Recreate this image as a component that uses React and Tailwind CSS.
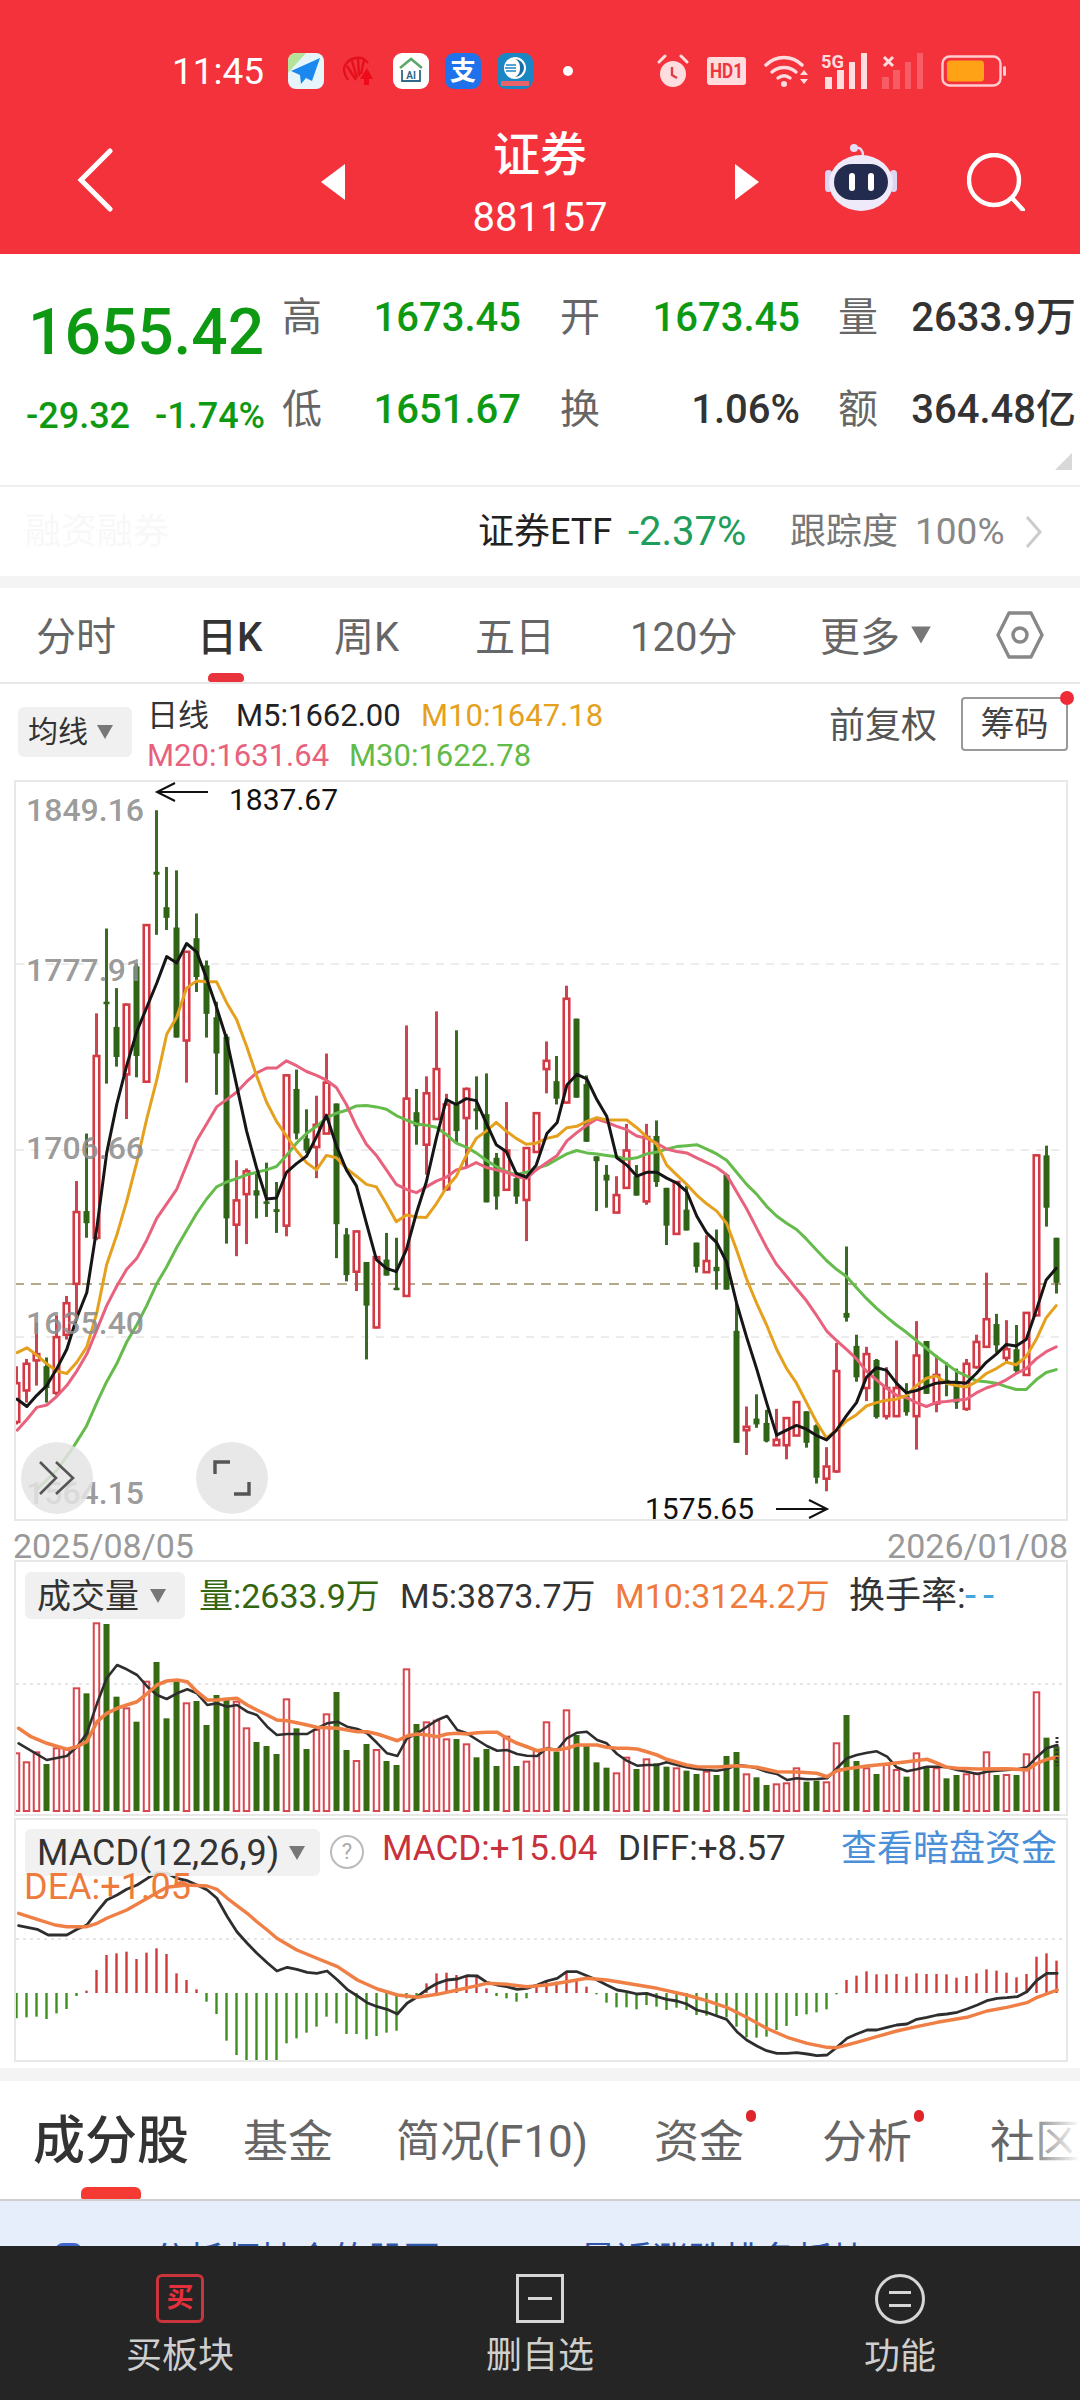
import React from "react";

const parse = (s) => s.trim().split(/\s+/).map((p) => p.split(",").map(Number));
const kx = 2.904, ky = 2.063;
const candlePts = (l, r) =>
  [...parse(l).map(([x, y]) => [x / kx, 770 + y / ky]), ...parse(r).map(([x, y]) => [540 + x / kx, 770 + y / ky])]
    .map(([x, y]) => `${x.toFixed(1)},${y.toFixed(1)}`).join(" ");
const pts2 = (s, top) => parse(s).map(([x, y]) => `${(x / 1.452).toFixed(1)},${(top + y / 3).toFixed(1)}`).join(" ");

// type, wick top, body top, body bottom, wick bottom (measured on the zoomed reference)
const CANDLES = `r 1230 1265 1345 1350|r 1215 1225 1280 1305|r 1140 1205 1218 1270|g 1212 1230 1275 1305|r 1125 1170 1285 1290|r 1085 1100 1165 1175|r 848 912 1060 1130|g 750 910 935 965|r 502 590 965 970|g 327 478 482 647|g 450 530 592 612|r 482 484 628 720|g 400 405 590 634|r 320 320 643 645|g 83 210 216 340|g 200 283 305 330|g 207 325 552 552|r 375 375 558 645|g 296 347 427 458|g 393 403 503 552|g 478 510 585 670|g 545 550 925 977|r 805 888 938 1003|r 822 828 875 978|g 830 867 878 925|g 810 890 895 922|g 850 906 912 955|r 628 630 940 962|g 618 658 750 762|g 700 760 785 790|r 672 732 778 842|r 585 645 750 750|g 688 688 937 1007|g 945 958 1042 1055|r 950 952 1035 1075|g 1015 1015 1105 1216|r 1005 1005 1150 1152|g 955 1010 1043 1043|g 965 1068 1073 1073|r 527 678 1085 1087|g 658 706 735 773|r 632 667 773 835|r 498 617 720 722|r 668 690 865 868|g 537 690 745 770|r 655 658 718 820|g 632 698 704 742|g 626 710 892 892|g 790 800 880 907|r 685 785 866 868|g 830 842 880 895|r 778 780 887 972|r 707 708 788 790|r 560 600 617 667|g 590 642 678 690|r 445 472 686 688|g 513 513 676 676|g 630 648 767 767|g 797 797 807 910|g 815 835 847 903|r 838 877 913 913|r 730 785 862 862|g 815 838 878 878|r 730 757 890 897|g 723 755 850 860|g 862 862 940 980|r 848 850 957 958|g 858 907 950 950|g 975 975 1025 1037|r 960 1013 1036 1037|g 948 1025 1034 1072|g 835 835 1072 1072|g 1100 1157 1388 1388|r 1313 1355 1362 1413|g 1288 1338 1350 1357|g 1320 1347 1385 1387|r 1318 1382 1393 1393|r 1335 1337 1393 1422|r 1303 1304 1373 1373|g 1323 1323 1388 1398|g 1350 1352 1460 1472|r 1397 1437 1462 1488|r 1182 1240 1447 1450|g 983 1120 1130 1138|g 1165 1188 1253 1262|r 1190 1205 1275 1302|g 1215 1217 1335 1338|r 1232 1275 1333 1340|r 1177 1275 1333 1335|g 1265 1290 1325 1332|r 1137 1208 1333 1402|g 1178 1178 1287 1287|r 1207 1248 1307 1325|g 1222 1258 1265 1292|g 1235 1265 1305 1318|r 1215 1225 1318 1322|r 1165 1180 1232 1235|r 1037 1133 1190 1192|g 1122 1143 1187 1202|r 1135 1195 1213 1222|g 1145 1195 1240 1245|r 1120 1120 1248 1250|r 795 795 1125 1127|g 775 795 903 942|g 965 965 1058 1080`
  .split("|").map((s) => { const [t, ...n] = s.split(" "); return [t, ...n.map((v) => 770 + Number(v) / ky)]; });

const MA5 = candlePts("50,1298 78,1313 107,1290 136,1270 165,1235 194,1195 223,1130 252,1078 281,945 310,790 339,690 368,610 397,540 426,490 455,440 484,385 513,398 542,358 571,375 600,430 629,490 658,555 687,650 716,745 745,820 774,885 803,883 832,830 861,812 890,797 919,757 948,712 977,775 1006,825 1035,858 1064,935 1093,1010 1122,1028 1151,1035 1180,990 1209,915 1238,850 1267,760 1296,680 1325,690 1354,678 1383,682 1412,728 1441,773 1470,787 1499,832 1528,840 1557,815",
  "20,750 50,727 78,650 107,628 136,637 165,680 194,715 223,800 252,815 281,838 310,830 339,830 368,842 397,852 426,870 455,920 484,955 513,975 542,1015 571,1100 600,1170 629,1235 658,1305 687,1372 716,1362 745,1352 774,1360 803,1373 832,1382 861,1362 890,1332 919,1305 948,1253 977,1233 1006,1238 1035,1265 1064,1285 1093,1280 1122,1272 1151,1265 1180,1263 1209,1263 1238,1265 1267,1245 1296,1222 1325,1205 1354,1185 1383,1188 1412,1175 1441,1115 1470,1052 1499,1028");
const MA10 = candlePts("50,1202 78,1192 107,1207 136,1225 165,1240 194,1245 223,1222 252,1190 281,1120 310,1020 339,960 368,890 397,810 426,720 455,640 484,545 513,510 542,450 571,435 600,437 629,437 658,480 687,515 716,570 745,630 774,685 803,725 832,755 861,785 890,810 919,825 948,795 977,800 1006,822 1035,838 1064,855 1093,860 1122,895 1151,932 1180,918 1209,922 1238,923 1267,895 1296,862 1325,838 1354,795 1383,760 1412,745 1441,727 1470,745 1499,760 1528,772 1557,770",
  "20,760 50,755 78,738 107,735 136,725 165,717 194,722 223,722 252,722 281,738 310,757 339,772 368,815 397,835 426,855 455,877 484,895 513,910 542,935 571,990 600,1050 629,1100 658,1145 687,1195 716,1235 745,1265 774,1305 803,1345 832,1378 861,1362 890,1343 919,1330 948,1312 977,1305 1006,1300 1035,1298 1064,1290 1093,1270 1122,1255 1151,1250 1180,1265 1209,1270 1238,1273 1267,1262 1296,1245 1325,1235 1354,1222 1383,1227 1412,1210 1441,1175 1470,1130 1499,1105");
const MA20 = candlePts("50,1362 78,1340 107,1315 136,1310 165,1292 194,1270 223,1240 252,1205 281,1155 310,1105 339,1065 368,1030 397,1008 426,970 455,925 484,895 513,865 542,815 571,765 600,730 629,695 658,680 687,665 716,643 745,625 774,615 803,615 832,600 861,610 890,622 919,630 948,640 977,655 1006,690 1035,735 1064,772 1093,795 1122,825 1151,855 1180,865 1209,872 1238,860 1267,848 1296,840 1325,825 1354,820 1383,810 1412,820 1441,825 1470,830 1499,838 1528,843 1557,825",
  "20,810 50,795 78,765 107,748 136,733 165,720 194,727 223,735 252,742 281,755 310,760 339,770 368,782 397,787 426,790 455,800 484,810 513,820 542,835 571,870 600,905 629,945 658,985 687,1020 716,1045 745,1070 774,1095 803,1125 832,1157 861,1177 890,1195 919,1215 948,1240 977,1258 1006,1275 1035,1290 1064,1295 1093,1305 1122,1313 1151,1305 1180,1303 1209,1300 1238,1298 1267,1285 1296,1275 1325,1268 1354,1258 1383,1245 1412,1235 1441,1215 1470,1200 1499,1190");
const MA30 = candlePts("110,1482 165,1445 210,1400 250,1355 281,1305 310,1262 339,1225 368,1180 397,1145 426,1105 455,1060 484,1025 513,985 542,950 571,915 600,885 629,860 658,850 687,843 716,835 745,830 774,825 803,818 832,795 861,770 890,750 919,735 948,718 977,708 1006,702 1035,693 1064,692 1093,695 1122,700 1151,713 1180,722 1209,730 1238,733 1267,737 1296,752 1325,770 1354,778 1383,790 1412,805 1441,818 1470,828 1499,835 1528,830 1557,822",
  "20,815 50,803 78,792 107,785 136,790 165,792 194,795 223,798 252,803 281,800 310,792 339,788 368,782 397,777 426,775 455,773 484,782 513,792 542,805 571,830 600,855 629,875 658,900 687,920 716,935 745,948 774,968 803,990 832,1012 861,1030 890,1045 919,1068 948,1090 977,1110 1006,1128 1035,1145 1064,1160 1093,1177 1122,1193 1151,1210 1180,1225 1209,1240 1238,1250 1267,1260 1296,1262 1325,1265 1354,1272 1383,1278 1412,1278 1441,1258 1470,1243 1499,1237");

const VOL = `670r 697r 667r 702g 655r 658r 475r 490g 280r 282g 500g 535r 575g 455r 396g 565g 455g 520r 513g 585g 495g 510g 515r 595r 636g 648g 672g 508r 595g 657g 600r 553r 486g 660g 693r 642g 660r 693g 705g 418r 582g 577r 572r 628r 627g 643r 682g 657g 708g 620r 708g 695r 660r 577r 665g 541r 615g 645g 697g 713g 730r 683r 717g 688r 700g 710g 715r 722g 732g 725r 735g 678g 666g 733r 742g 765g 763r 760r 715r 755g 752g 757r 640r 555g 693g 715r 732g 705r 720r 740g 670r 708g 715r 745g 735g 733r 730r 667r 735g 735r 735g 673r 487r 623g 650g`
  .split(" ").map((s) => [s.slice(-1), 1530 + Number(s.slice(0, -1)) / 3]);
const VOLK = pts2("27,640 68,690 97,678 112,650 126,610 141,520 155,445 170,405 184,418 199,435 214,470 228,495 242,507 257,490 272,478 286,490 301,525 315,520 330,530 344,525 359,545 373,555 388,590 402,615 417,612 446,612 460,595 475,580 490,575 504,590 519,597 533,610 548,640 562,670 577,678 591,625 606,610 620,590 635,570 649,558 664,600 678,610 693,630 707,648 722,662 736,660 751,672 765,677 780,678 794,655 809,660 823,625 838,608 852,605 867,630 881,640 896,672 910,692 925,707 939,705 954,705 968,697 983,705 997,712 1012,717 1026,720 1041,722 1055,717 1070,705 1084,708 1099,715 1113,725 1128,732 1143,750 1157,745 1172,748 1186,747 1201,745 1215,715 1230,685 1244,675 1259,668 1273,664 1288,680 1302,712 1317,724 1331,718 1346,710 1361,710 1375,712 1390,720 1404,725 1419,732 1433,725 1448,722 1462,720 1477,718 1491,712 1506,680 1520,655 1535,645", 1530);
const VOLO = pts2("27,595 45,620 68,640 97,658 112,650 126,635 141,575 155,550 170,535 184,525 199,515 214,490 228,465 242,453 257,450 272,455 286,485 301,510 315,510 330,507 344,505 359,525 373,540 388,555 402,570 417,572 431,578 446,585 460,592 490,595 504,600 519,605 533,605 548,612 562,622 577,632 591,618 606,612 620,615 635,620 649,612 664,610 678,612 693,608 707,607 722,607 736,625 751,640 765,650 780,662 794,657 809,660 823,655 838,645 852,645 867,645 881,652 896,655 910,655 925,657 939,665 954,675 968,688 983,697 997,705 1012,710 1041,711 1070,707 1099,712 1128,725 1157,726 1186,730 1201,740 1215,722 1230,716 1259,708 1288,702 1317,695 1346,688 1361,700 1375,712 1390,715 1419,717 1462,716 1491,720 1506,700 1520,688 1535,682", 1530);

const MACD = `625 622 620 627 610 597 558 542 480 435 430 425 447 428 415 432 490 510 538 575 612 692 735 750 755 755 752 700 685 668 650 620 640 672 672 688 678 668 662 565 560 520 490 488 495 495 500 535 558 565 575 565 530 515 515 485 510 530 553 578 592 592 598 585 590 600 593 600 615 617 620 622 650 682 683 680 660 648 618 613 607 598 553 510 497 484 493 493 492 500 490 492 492 493 503 498 490 478 482 488 502 492 440 430 452`
  .split(" ").map(Number);
const MACK = pts2("27,347 54,358 70,375 97,375 112,358 126,345 141,305 155,270 170,255 184,238 199,225 214,205 228,188 242,190 257,205 272,212 286,225 301,240 315,265 330,320 344,365 359,400 373,430 388,458 402,483 417,472 431,478 446,487 460,490 475,483 490,510 504,538 519,558 533,578 548,590 562,598 577,612 591,580 606,560 620,538 635,520 649,510 664,507 678,497 693,498 707,517 722,525 736,530 751,538 765,535 780,525 794,513 809,505 823,485 838,485 852,497 867,510 881,525 896,540 910,545 925,552 939,550 954,560 968,568 983,573 997,582 1012,600 1026,607 1041,618 1055,628 1070,665 1084,690 1099,708 1113,722 1128,730 1143,730 1157,728 1172,732 1186,737 1201,735 1215,712 1230,685 1244,672 1259,660 1273,660 1288,652 1302,645 1317,642 1331,628 1346,622 1361,615 1375,612 1390,607 1404,597 1419,585 1433,572 1448,565 1462,563 1477,560 1491,545 1506,510 1520,490 1535,490", 1810);
const MACO = pts2("27,310 54,328 80,345 97,350 126,350 141,340 155,325 184,300 214,265 242,232 272,225 301,228 315,238 330,265 359,310 373,335 388,360 402,385 431,420 460,445 490,470 519,510 548,537 577,555 606,562 635,553 664,540 693,527 707,520 736,523 765,530 794,525 823,515 852,505 881,510 910,520 954,535 997,555 1026,572 1055,592 1084,622 1113,655 1143,682 1172,700 1201,712 1215,713 1244,697 1273,680 1302,663 1331,650 1361,637 1404,622 1433,603 1462,592 1491,578 1506,562 1535,540", 1810);

const Line = ({ points, color, w = 3 }) => (
  <polyline points={points} fill="none" stroke={color} strokeWidth={w} strokeLinejoin="round" strokeLinecap="round" />
);

const Caret = ({ className = "" }) => (
  <svg width="18" height="16" viewBox="0 0 18 16" className={className}><path d="M1 1h16L9 15z" fill="#777" /></svg>
);

function CandleChart() {
  return (
    <svg viewBox="16 782 1050 737" className="absolute inset-0 w-full h-full">
      <g stroke="#e6e6e6" strokeWidth="1.5" strokeDasharray="8 7">
        <line x1="16" x2="1066" y1="964" y2="964" />
        <line x1="16" x2="1066" y1="1150" y2="1150" />
        <line x1="16" x2="1066" y1="1337" y2="1337" />
      </g>
      <line x1="14" x2="1068" y1="1284" y2="1284" stroke="#b3a98a" strokeWidth="2" strokeDasharray="10 7" />
      {CANDLES.map(([t, wt, bt, bb, wb], i) => {
        const x = 16.5 + i * 10;
        if (t === "g")
          return (
            <g key={i}>
              <line x1={x} x2={x} y1={wt} y2={wb} stroke="#3a6b24" strokeWidth="3" />
              <rect x={x - 3} y={bt} width="6" height={Math.max(bb - bt, 2.5)} fill="#2f6417" />
            </g>
          );
        return (
          <g key={i}>
            <line x1={x} x2={x} y1={wt} y2={bt} stroke="#cb4550" strokeWidth="3" />
            <line x1={x} x2={x} y1={bb} y2={wb} stroke="#cb4550" strokeWidth="3" />
            <rect x={x - 2.75} y={bt} width="5.5" height={bb - bt} fill="#fff" stroke="#d43a46" strokeWidth="2.6" />
          </g>
        );
      })}
      <Line points={MA30} color="#65bb4c" />
      <Line points={MA20} color="#e8617d" />
      <Line points={MA10} color="#e5a11e" />
      <Line points={MA5} color="#161616" />
      <path d="M208 792H158M175 783l-18 9 18 9" fill="none" stroke="#111" strokeWidth="2" />
      <path d="M776 1509H826M809 1500l18 9-18 9" fill="none" stroke="#111" strokeWidth="2" />
    </svg>
  );
}

function VolChart() {
  return (
    <svg viewBox="16 1562 1050 252" className="absolute inset-0 w-full h-full">
      <line x1="16" x2="1066" y1="1684" y2="1684" stroke="#ddd" strokeWidth="1.5" strokeDasharray="3 4" />
      {VOL.map(([t, top], i) => {
        const x = 16.5 + i * 10;
        return t === "g"
          ? <rect key={i} x={x - 3} y={top} width="6" height={1811 - top} fill="#376b13" />
          : <rect key={i} x={x - 2.75} y={top} width="5.5" height={1811 - top} fill="#fff" stroke="#d8464f" strokeWidth="2" />;
      })}
      <Line points={VOLK} color="#2e2e2e" w="2.6" />
      <Line points={VOLO} color="#ef7f45" w="3.6" />
      <line x1="1057" x2="1057" y1="1737" y2="1766" stroke="#333" strokeWidth="3" strokeDasharray="2 2" />
    </svg>
  );
}

function MacdChart() {
  return (
    <svg viewBox="16 1820 1050 240" className="absolute inset-0 w-full h-full">
      <line x1="16" x2="1066" y1="1939" y2="1939" stroke="#ddd" strokeWidth="1.5" strokeDasharray="3 4" />
      {MACD.map((v, i) => {
        const x = 16.5 + i * 10;
        const y = 1810 + v / 3;
        return <line key={i} x1={x} x2={x} y1="1993" y2={y} stroke={v > 548 ? "#3f8f1f" : "#d03a3a"} strokeWidth="2.4" />;
      })}
      <Line points={MACK} color="#2e2e2e" w="2.8" />
      <Line points={MACO} color="#ef7f45" w="3.4" />
    </svg>
  );
}

function Status() {
  return (
    <div className="h-[110px] pt-[32px] flex items-start">
      <div className="h-[78px] flex items-center pl-[172px] text-white">
        <span className="w-[92px] text-[37px] leading-none">11:45</span>
        {/* plane */}
        <svg width="36" height="36" viewBox="0 0 36 36" className="ml-[24px]">
          <rect width="36" height="36" rx="8" fill="#e6f5fa" />
          <path d="M0 8a8 8 0 0 1 8-8h10L0 20z" fill="#b6e39c" />
          <path d="M32 5L3 18l9 4 1 9 5-6 6 3z" fill="#1a88ee" />
        </svg>
        {/* shell */}
        <svg width="32" height="30" viewBox="0 0 32 30" className="ml-[18px]" fill="none" stroke="#e4101c" strokeWidth="2.4">
          <path d="M6 24C1 17 1 11 4 8c3-5 11-8 18-5l4 4" />
          <path d="M14 24L5 10M15 22L10 5M17 20L16 2M19 18l3-14" />
          <path d="M25 12l6 11h-4v6h-5v-6h-4z" fill="#ee0c1a" stroke="none" />
        </svg>
        {/* AI house */}
        <div className="ml-[19px] w-[36px] h-[36px] rounded-[9px] bg-white relative">
          <svg width="36" height="36" viewBox="0 0 36 36" className="absolute inset-0">
            <path d="M7 15L18 6l11 9" fill="none" stroke="#5aa86a" strokeWidth="2.6" />
            <path d="M9 17v11h18V17" fill="none" stroke="#2d6a8a" strokeWidth="1.8" />
            <text x="18" y="26" textAnchor="middle" fontSize="10" fontWeight="700" fill="#2d6a8a" fontFamily="Roboto">AI</text>
          </svg>
        </div>
        <div className="ml-[16px] w-[36px] h-[36px] rounded-[9px] bg-[#1f72ea] flex items-center justify-center text-[26px] leading-none font-bold text-white">支</div>
        {/* blue ball */}
        <svg width="36" height="36" viewBox="0 0 36 36" className="ml-[16px]">
          <rect width="36" height="36" rx="9" fill="#1b86c4" />
          <circle cx="18" cy="15" r="11" fill="#fff" />
          <path d="M18 6a9 9 0 0 1 0 18c4-2 5-5 5-9s-1-7-5-9z" fill="#1b6fa8" />
          <path d="M9 12h10M8 15h11M9 18h10" stroke="#1b86c4" strokeWidth="1.4" />
          <rect x="4" y="28" width="28" height="5" fill="#e8636a" />
        </svg>
        <span className="ml-[30px] w-[10px] h-[10px] rounded-full bg-white" />
        {/* alarm */}
        <svg width="32" height="34" viewBox="0 0 32 34" className="ml-[84px]">
          <circle cx="16" cy="20" r="13" fill="#ffdcde" />
          <path d="M2 8l6-6M30 8l-6-6" stroke="#ffdcde" strokeWidth="3" strokeLinecap="round" />
          <path d="M15 13v8l5 3" stroke="#d8404a" strokeWidth="2.4" fill="none" />
        </svg>
        <svg width="39" height="28" viewBox="0 0 39 28" className="ml-[18px]">
          <rect width="39" height="28" rx="3" fill="#ffdcde" />
          <text x="19.5" y="21" textAnchor="middle" fontSize="20" fontWeight="700" fill="#ee3540" fontFamily="Roboto" textLength="33" lengthAdjust="spacingAndGlyphs">HD1</text>
        </svg>
        {/* wifi */}
        <svg width="45" height="34" viewBox="0 0 45 34" className="ml-[18px]">
          <g fill="none" stroke="#ffdcde" strokeWidth="3.4" strokeLinecap="round">
            <path d="M2 11C12 1 28 1 38 11" />
            <path d="M8 18c7-6 17-6 24 0" />
            <path d="M14 24c4-3 8-3 12 0" />
          </g>
          <circle cx="20" cy="30" r="3" fill="#ffdcde" />
          <path d="M36 21l4-5 4 5zM36 25l4 5 4-5z" fill="#ffdcde" />
        </svg>
        {/* 5G */}
        <div className="ml-[12px] w-[48px] h-[36px] relative">
          <svg width="48" height="36" viewBox="0 0 48 36" className="absolute inset-0">
            <text x="0" y="15" fontSize="18" fontWeight="700" fill="#ffdcde" fontFamily="Roboto" textLength="23" lengthAdjust="spacingAndGlyphs">5G</text>
            <rect x="4" y="24" width="7" height="12" fill="#ffdcde" />
            <rect x="16" y="17" width="7" height="19" fill="#ffdcde" />
            <rect x="28" y="9" width="6" height="27" fill="#ffdcde" />
            <rect x="40" y="0" width="6" height="36" fill="#ffdcde" />
          </svg>
        </div>
        <svg width="45" height="36" viewBox="0 0 45 36" className="ml-[12px]">
          <path d="M3 4l9 9M12 4l-9 9" stroke="#ffdcde" strokeWidth="3" />
          <g fill="#ffdcde" opacity="0.25">
            <rect x="1" y="24" width="7" height="12" />
            <rect x="12" y="17" width="7" height="19" />
            <rect x="24" y="9" width="6" height="27" />
            <rect x="36" y="0" width="6" height="36" />
          </g>
        </svg>
        {/* battery */}
        <svg width="65" height="32" viewBox="0 0 65 32" className="ml-[15px]">
          <rect x="1.5" y="1.5" width="58" height="29" rx="7" fill="none" stroke="#ffcdd0" strokeWidth="2.4" />
          <rect x="6" y="5.5" width="37" height="21" rx="3.5" fill="#ffa216" />
          <rect x="62" y="11" width="3" height="10" rx="1.5" fill="#ffcdd0" />
        </svg>
      </div>
    </div>
  );
}

function Nav() {
  return (
    <div className="h-[144px] grid grid-cols-[321px_24px_390px_24px_66px_72px_70px_58px] items-center text-white">
      <div className="pl-[77px] -mt-[5px]">
        <svg width="36" height="64" viewBox="0 0 36 64" fill="none" stroke="#fff" strokeWidth="5" strokeLinecap="round">
          <path d="M33 3L4 32l29 29" />
        </svg>
      </div>
      <svg width="24" height="36" viewBox="0 0 24 36"><path d="M24 0v36L0 18z" fill="#fff" /></svg>
      <div className="flex flex-col items-center self-start pt-[21px]">
        <span className="text-[47px] leading-[47px] font-medium">证券</span>
        <span className="text-[40px] leading-[40px] mt-[20px]">881157</span>
      </div>
      <svg width="24" height="36" viewBox="0 0 24 36"><path d="M0 0v36l24-18z" fill="#fff" /></svg>
      <span />
      <svg width="72" height="68" viewBox="0 0 72 68" className="-mt-[8px]">
        <path d="M38 12c0-6-3-9-7-8" fill="none" stroke="#e6dcf5" strokeWidth="2.4" />
        <circle cx="29" cy="4" r="4" fill="#e6dcf5" />
        <rect x="0" y="26" width="7" height="22" rx="3.5" fill="#dcd6f2" />
        <rect x="65" y="26" width="7" height="22" rx="3.5" fill="#dcd6f2" />
        <ellipse cx="36" cy="39" rx="32" ry="28" fill="#eeeafa" />
        <rect x="9" y="20" width="54" height="36" rx="18" fill="#232c4e" />
        <rect x="24" y="29" width="6" height="18" rx="3" fill="#fff" />
        <rect x="43" y="29" width="6" height="18" rx="3" fill="#fff" />
      </svg>
      <span />
      <svg width="58" height="58" viewBox="0 0 58 58" fill="none" stroke="#fff" strokeWidth="4.4">
        <circle cx="27" cy="27" r="25" />
        <path d="M46 46l10 11" strokeLinecap="round" />
      </svg>
    </div>
  );
}

const G = "text-[#0d9a12]";
const Label = ({ children }) => <span className="justify-self-end w-[40px] text-[40px] leading-none text-[#666]">{children}</span>;
const Val = ({ children, c = G }) => <span className={`text-[40px] leading-none text-right font-medium whitespace-nowrap ${c}`}>{children}</span>;

function Quote() {
  return (
    <div className="relative h-[231px] flex">
      <div className="w-[282px] shrink-0 relative">
        <div className={`pl-[28px] pt-[47px] text-[64px] leading-[64px] font-medium ${G}`}>1655.42</div>
        <div className={`pl-[26px] mt-[33px] flex text-[36px] leading-[36px] font-medium ${G}`}>
          <span className="w-[129px]">-29.32</span><span>-1.74%</span>
        </div>
      </div>
      <div className="grid grid-cols-[40px_199px_79px_200px_78px_198px] grid-rows-[92px_92px] pt-[18px] items-center h-fit">
        <Label>高</Label><Val>1673.45</Val>
        <Label>开</Label><Val>1673.45</Val>
        <Label>量</Label><Val c="text-[#333]">2633.9万</Val>
        <Label>低</Label><Val>1651.67</Val>
        <Label>换</Label><Val c="text-[#333]">1.06%</Val>
        <Label>额</Label><Val c="text-[#333]">364.48亿</Val>
      </div>
      <svg width="17" height="17" viewBox="0 0 17 17" className="absolute left-[1055px] top-[199px]"><path d="M17 0v17H0z" fill="#d8d8d8" /></svg>
    </div>
  );
}

function Etf() {
  return (
    <div className="h-[91px] border-t-2 border-[#efefef] flex items-center relative">
      <span className="absolute left-[25px] text-[36px] text-[#f8f8f8]">融资融券</span>
      <span className="ml-[478px] w-[150px] text-[36px] leading-none text-[#222]">证券ETF</span>
      <span className="w-[162px] text-[40px] leading-none text-[#1f9d5b]">-2.37%</span>
      <span className="w-[125px] text-[36px] leading-none text-[#777]">跟踪度</span>
      <span className="w-[110px] text-[37px] leading-none text-[#888]">100%</span>
      <svg width="17" height="34" viewBox="0 0 17 34" fill="none" stroke="#ccc" strokeWidth="3"><path d="M2 2l13 15L2 32" /></svg>
    </div>
  );
}

function Tabs() {
  return (
    <div className="h-[96px] border-b-2 border-[#e8e8e8] relative text-[40px] leading-none text-[#666]">
      <div className="h-full flex items-center pt-[6px]">
        <span className="ml-[36px] w-[161px]">分时</span>
        <span className="w-[137px] text-[#333] font-medium">日K</span>
        <span className="w-[141px]">周K</span>
        <span className="w-[155px]">五日</span>
        <span className="w-[190px]">120分</span>
        <span className="w-[90px]">更多</span>
        <Caret className="w-[22px] h-[20px] -mt-[6px]" />
        <svg width="48" height="48" viewBox="0 0 48 48" className="ml-[64px] -mt-[6px]" fill="none" stroke="#888" strokeWidth="3.4">
          <path d="M13 2h22l11 22-11 22H13L2 24z" strokeLinejoin="round" />
          <circle cx="24" cy="24" r="7" />
        </svg>
      </div>
      <span className="absolute left-[208px] bottom-0 w-[36px] h-[9px] rounded-t-[5px] rounded-b-[3px] bg-[#e8333c]" />
    </div>
  );
}

function ChartHead() {
  return (
    <div className="h-[96px] relative flex">
      <div className="ml-[18px] mt-[23px] w-[114px] h-[50px] rounded-[6px] bg-[#f0f0f0] flex items-center pl-[10px] text-[30px] leading-none text-[#333] gap-[8px]">
        <span>均线</span><Caret className="w-[18px] h-[16px]" />
      </div>
      <div className="ml-[15px] text-[31px] leading-[40px] pt-[12px]">
        <div className="flex">
          <span className="w-[89px] text-[#333]">日线</span>
          <span className="w-[185px] text-[#222]">M5:1662.00</span>
          <span className="text-[#e5a11e]">M10:1647.18</span>
        </div>
        <div className="flex">
          <span className="w-[202px] text-[#e8617d]">M20:1631.64</span>
          <span className="text-[#62bb46]">M30:1622.78</span>
        </div>
      </div>
      <span className="absolute left-[829px] top-[24px] text-[36px] leading-[36px] text-[#555]">前复权</span>
      <div className="absolute left-[961px] top-[13px] w-[107px] h-[54px] rounded-[4px] border-2 border-[#999] flex items-center justify-center text-[34px] leading-none text-[#444]">筹码</div>
      <span className="absolute left-[1060px] top-[7px] w-[14px] h-[14px] rounded-full bg-[#ee2c38]" />
    </div>
  );
}

const AxisLabel = ({ className, children }) => (
  <span className={`absolute left-[10px] text-[32px] leading-[32px] font-medium text-[#8e8e8e]/90 ${className}`}>{children}</span>
);

function Main() {
  return (
    <div className="mx-[14px] w-[1054px] h-[741px] relative border-2 border-[#e8e8e8]">
      <CandleChart />
      <AxisLabel className="top-[12px]">1849.16</AxisLabel>
      <AxisLabel className="top-[172px]">1777.91</AxisLabel>
      <AxisLabel className="top-[350px]">1706.66</AxisLabel>
      <AxisLabel className="top-[525px]">1635.40</AxisLabel>
      <AxisLabel className="top-[695px]">1564.15</AxisLabel>
      <span className="absolute left-[213px] top-[3px] text-[30px] leading-[30px] text-[#111]">1837.67</span>
      <span className="absolute left-[629px] top-[712px] text-[30px] leading-[30px] text-[#111]">1575.65</span>
      <div className="absolute left-[5px] top-[660px] w-[72px] h-[72px] rounded-full bg-[#e4e4e4]/85 flex items-center justify-center">
        <svg width="36" height="34" viewBox="0 0 36 34" fill="none" stroke="#555" strokeWidth="2.6"><path d="M1 1l16 16L1 33M17 1l17 16-17 16" /></svg>
      </div>
      <div className="absolute left-[180px] top-[660px] w-[72px] h-[72px] rounded-full bg-[#e4e4e4]/85 flex items-center justify-center">
        <svg width="38" height="36" viewBox="0 0 38 36" fill="none" stroke="#555" strokeWidth="3.4"><path d="M2 14V2h15M36 22v12H21" /></svg>
      </div>
    </div>
  );
}

function Vol() {
  return (
    <div className="mx-[14px] w-[1054px] h-[256px] relative border-2 border-[#e8e8e8]">
      <VolChart />
      <div className="relative flex items-center pt-[10px] text-[34px] leading-none">
        <div className="ml-[9px] w-[160px] h-[47px] rounded-[6px] bg-[#f0f0f0] flex items-center pl-[12px] gap-[10px] text-[#333]">
          <span>成交量</span><Caret />
        </div>
        <span className="ml-[14px] w-[201px] text-[#33660f]">量:2633.9万</span>
        <span className="w-[215px] text-[#333]">M5:3873.7万</span>
        <span className="w-[234px] text-[#ee7a3c]">M10:3124.2万</span>
        <span className="w-[116px] text-[36px] text-[#333] whitespace-nowrap">换手率:</span>
        <span className="text-[40px] tracking-[7px] text-[#45a5e0]">--</span>
      </div>
    </div>
  );
}

function Macd() {
  return (
    <div className="mx-[14px] w-[1054px] h-[244px] relative border-2 border-[#e8e8e8]">
      <MacdChart />
      <div className="relative flex items-start pt-[9px] leading-none">
        <div className="ml-[9px] w-[295px] h-[47px] rounded-[6px] bg-[#f0f0f0]/90 flex items-center pl-[12px] gap-[8px] text-[36px] text-[#333]">
          <span className="w-[243px] whitespace-nowrap">MACD(12,26,9)</span><Caret />
        </div>
        <span className="ml-[10px] mt-[6px] w-[34px] h-[34px] rounded-full border-2 border-[#bbb] flex items-center justify-center text-[22px] text-[#aaa]">?</span>
        <span className="ml-[18px] mt-[2px] w-[236px] text-[35px] text-[#c8323c]">MACD:+15.04</span>
        <span className="mt-[2px] w-[223px] text-[35px] text-[#333]">DIFF:+8.57</span>
        <span className="mt-[2px] text-[36px] text-[#4a8fd8] whitespace-nowrap">查看暗盘资金</span>
      </div>
      <span className="absolute left-[8px] top-[49px] text-[36px] leading-none text-[#ee7a3c]">DEA:+1.05</span>
    </div>
  );
}

function Tabs2() {
  return (
    <div className="h-[120px] border-b-2 border-[#cfcfcf] relative overflow-hidden">
      <div className="h-full flex items-center text-[45px] leading-none text-[#666] pt-[4px]">
        <span className="ml-[33px] w-[210px] text-[52px] font-medium text-[#333]">成分股</span>
        <span className="w-[153px]">基金</span>
        <span className="w-[258px] text-[44px] whitespace-nowrap">简况(F10)</span>
        <span className="w-[168px]">资金</span>
        <span className="w-[168px]">分析</span>
        <span className="whitespace-nowrap">社区</span>
      </div>
      <span className="absolute left-[746px] top-[29px] w-[10px] h-[12px] rounded-full bg-[#e0242c]" />
      <span className="absolute left-[914px] top-[29px] w-[10px] h-[12px] rounded-full bg-[#e0242c]" />
      <span className="absolute left-[81px] bottom-0 w-[60px] h-[12px] rounded-t-[6px] rounded-b-[2px] bg-[#f43a32]" />
      <span className="absolute right-0 top-0 h-full w-[60px] bg-linear-to-r from-white/0 to-white" />
    </div>
  );
}

function Notice() {
  return (
    <div className="h-[45px] bg-[#e6edfb] overflow-hidden pt-[42px] flex text-[36px] leading-none text-[#2f55a8]">
      <span className="ml-[55px] w-[27px] h-[20px] rounded-t-[8px] border-[4px] border-[#3f66c8] shrink-0" />
      <span className="ml-[70px] w-[428px] whitespace-nowrap">分析师持仓的股票</span>
      <span className="whitespace-nowrap">最近涨跌排名板块</span>
    </div>
  );
}

function Bottom() {
  return (
    <div className="h-[154px] bg-[#252525] grid grid-cols-3 text-[36px] leading-none text-[#cfcfcf]">
      {[
        ["买板块", <div key="a" className="w-[48px] h-[49px] rounded-[6px] border-[3px] border-[#c9343d] flex items-center justify-center text-[27px] font-bold text-[#e3303c]">买</div>],
        ["删自选", <div key="b" className="w-[48px] h-[49px] border-[3px] border-[#d6d6d6] flex items-center justify-center"><span className="w-[24px] h-[3px] bg-[#d6d6d6]" /></div>],
        ["功能", <div key="c" className="w-[50px] h-[50px] rounded-full border-[3px] border-[#d6d6d6] flex flex-col gap-[10px] items-center justify-center"><span className="w-[22px] h-[3px] bg-[#d6d6d6]" /><span className="w-[22px] h-[3px] bg-[#d6d6d6]" /></div>],
      ].map(([t, icon]) => (
        <div key={t} className="flex flex-col items-center pt-[28px] gap-[15px]">
          {icon}
          <span>{t}</span>
        </div>
      ))}
    </div>
  );
}

export default function App() {
  return (
    <div className="w-[1080px] h-[2400px] overflow-hidden bg-white font-['Roboto','Noto_Sans_CJK_SC',sans-serif]">
      <div className="h-[254px] bg-[#f3323c]">
        <Status />
        <Nav />
      </div>
      <Quote />
      <Etf />
      <div className="h-[12px] bg-[#f4f4f4]" />
      <Tabs />
      <ChartHead />
      <Main />
      <div className="h-[39px] pl-[13px] pr-[12px] pt-[10px] flex justify-between items-center text-[34px] leading-none text-[#999]">
        <span>2025/08/05</span><span>2026/01/08</span>
      </div>
      <Vol />
      <div className="h-[2px]" />
      <Macd />
      <div className="h-[6px]" />
      <div className="h-[13px] bg-[#f4f4f4]" />
      <Tabs2 />
      <Notice />
      <Bottom />
    </div>
  );
}
